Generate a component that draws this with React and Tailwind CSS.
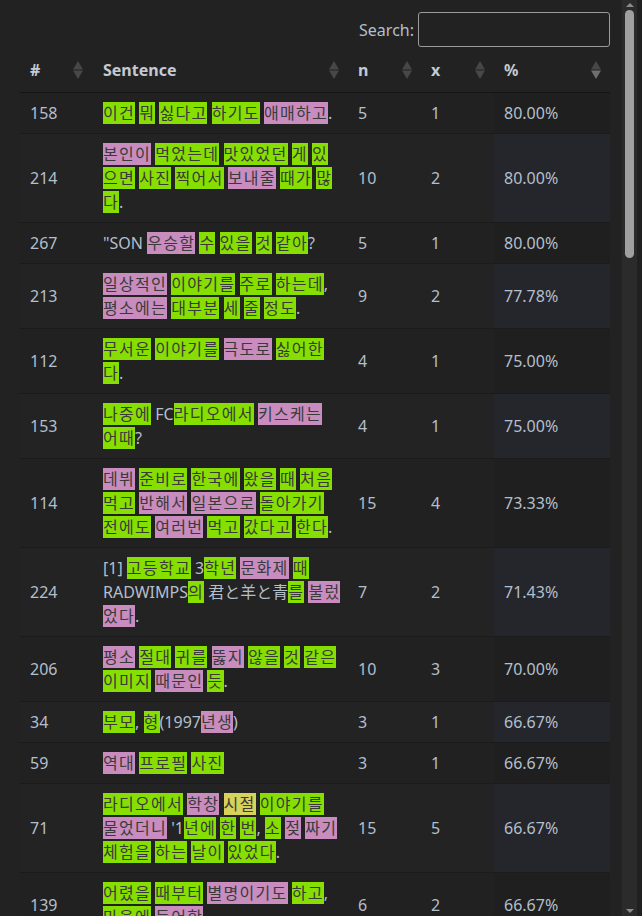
import React from 'react';

const ROWS = [
  ['158', 'g{이건} g{뭐} g{싫다고} g{하기도} p{애매하고}.', '5', '1', '80.00%'],
  ['214', 'p{본인이} g{먹었는데} g{맛있었던} g{게} g{있으면} g{사진} g{찍어서} p{보내줄} g{때가} g{많다}.', '10', '2', '80.00%'],
  ['267', '"SON p{우승할} g{수} g{있을} g{것} g{같아}?', '5', '1', '80.00%'],
  ['213', 'p{일상적인} g{이야기를} g{주로} g{하는데}, p{평소에는} g{대부분} g{세} g{줄} g{정도}.', '9', '2', '77.78%'],
  ['112', 'g{무서운} g{이야기를} p{극도로} g{싫어한다}.', '4', '1', '75.00%'],
  ['153', 'g{나중에} FCg{라디오에서} p{키스케는} g{어때}?', '4', '1', '75.00%'],
  ['114', 'p{데뷔} g{준비로} g{한국에} g{왔을} g{때} g{처음} g{먹고} p{반해서} p{일본으로} g{돌아가기} g{전에도} p{여러번} g{먹고} g{갔다고} g{한다}.', '15', '4', '73.33%'],
  ['224', '[1] g{고등학교} 3g{학년} p{문화제} g{때} RADWIMPSg{의} 君と羊と青g{를} p{불렀었다}.', '7', '2', '71.43%'],
  ['206', 'p{평소} g{절대} g{귀를} p{뚫지} g{않을} g{것} g{같은} g{이미지} p{때문인} g{듯}.', '10', '3', '70.00%'],
  ['34', 'g{부모}, g{형}(1997p{년생})', '3', '1', '66.67%'],
  ['59', 'p{역대} g{프로필} g{사진}', '3', '1', '66.67%'],
  ['71', "g{라디오에서} p{학창} y{시절} g{이야기를} p{물었더니} '1g{년에} g{한} g{번}, g{소} p{젖} p{짜기} g{체험을} g{하는} g{날이} g{있었다}.", '15', '5', '66.67%'],
  ['139', 'g{어렸을} g{때부터} p{별명이기도} g{하고}, g{마음에} p{들어함}.', '6', '2', '66.67%'],
];

// hangul in the screenshot is wider than Noto's, so the marked words get a little tracking
const MARK = {
  g: 'bg-[#86df00] text-[#3a3a3a] tracking-[1.3px]',
  p: 'bg-[#c88cbe] text-[#3a3a3a] tracking-[1.3px]',
  y: 'bg-[#d6d25a] text-[#3a3a3a] tracking-[1.3px]',
};

// turns "g{word} plain p{word}" into spans
function Sentence({ text }) {
  const out = [];
  const re = /([gpy])\{([^}]*)\}/g;
  let last = 0;
  let m;
  let k = 0;
  while ((m = re.exec(text))) {
    if (m.index > last) out.push(text.slice(last, m.index));
    out.push(<span key={k++} className={MARK[m[1]]}>{m[2]}</span>);
    last = re.lastIndex;
  }
  if (last < text.length) out.push(text.slice(last));
  return out;
}

function SortIcon({ active }) {
  return (
    <svg width="10" height="18" viewBox="0 0 10 18" className="shrink-0">
      <polygon points="5,0 10,8.6 0,8.6" fill="#474747" />
      <polygon points="0,9.4 10,9.4 5,18" fill={active ? '#6e6e6e' : '#474747'} />
    </svg>
  );
}

const HEADS = ['#', 'Sentence', 'n', 'x', '%'];

function Scrollbar() {
  return (
    <div className="flex w-[15px] shrink-0 flex-col items-center bg-[#2b2b2b]">
      <svg width="8" height="4" viewBox="0 0 8 4" className="mt-[3px]">
        <polygon points="4,0 8,4 0,4" fill="#8c8c8c" />
      </svg>
      <div className="mt-[3px] h-[248px] w-[9px] rounded-full bg-[#a0a0a0]" />
      <div className="flex-1" />
      <svg width="8" height="4" viewBox="0 0 8 4" className="mb-[3px]">
        <polygon points="0,0 8,0 4,4" fill="#8c8c8c" />
      </svg>
    </div>
  );
}

export default function App() {
  return (
    <div className="flex h-[916px] w-[642px] overflow-hidden bg-[#222222] font-['Noto_Sans','Noto_Sans_CJK_KR',sans-serif] text-base text-[#b4bfcc]">
      <div className="w-[622px] shrink-0 pl-[20px] pr-[12px] pt-[12px]">
        <div className="flex items-center justify-end gap-[4px]">
          <label>Search:</label>
          <input className="h-[35px] w-[192px] rounded-[3px] border border-[#9b9b9b] bg-transparent outline-none" />
        </div>

        <table className="mt-[1px] w-[590px] table-fixed border-collapse">
          <colgroup>
            <col className="w-[73px]" />
            <col className="w-[255px]" />
            <col className="w-[73px]" />
            <col className="w-[73px]" />
            <col className="w-[116px]" />
          </colgroup>
          <thead>
            <tr>
              {HEADS.map((h, i) => (
                <th key={h} className={`border-b border-[#151515] py-[10px] pl-[10px] text-left font-bold text-[#c3cad3] ${i === 0 ? 'pr-[10px]' : 'pr-[9px]'}`}>
                  <div className="flex items-center justify-between">
                    <span>{h}</span>
                    <SortIcon active={i === 4} />
                  </div>
                </th>
              ))}
            </tr>
          </thead>
          <tbody>
            {ROWS.map((r, i) => {
              const even = i % 2 === 1;
              const base = even ? 'bg-[#232323]' : 'bg-[#212121]';
              return (
                <tr key={r[0]}>
                  <td className={`border-t border-[#1b1b1b] px-[10px] py-[8px] align-middle ${base}`}>{r[0]}</td>
                  <td className={`border-t border-[#1b1b1b] py-[8px] pl-[10px] pr-[7px] align-middle ${base}`}>
                    <Sentence text={r[1]} />
                  </td>
                  <td className={`border-t border-[#1b1b1b] px-[10px] py-[8px] align-middle ${base}`}>{r[2]}</td>
                  <td className={`border-t border-[#1b1b1b] px-[10px] py-[8px] align-middle ${base}`}>{r[3]}</td>
                  <td className={`border-t border-[#1b1b1b] px-[10px] py-[8px] align-middle ${even ? 'bg-[#24262b]' : 'bg-[#1f1f1f]'}`}>{r[4]}</td>
                </tr>
              );
            })}
          </tbody>
        </table>
      </div>
      <Scrollbar />
      <div className="flex-1 bg-[#202020]" />
    </div>
  );
}
